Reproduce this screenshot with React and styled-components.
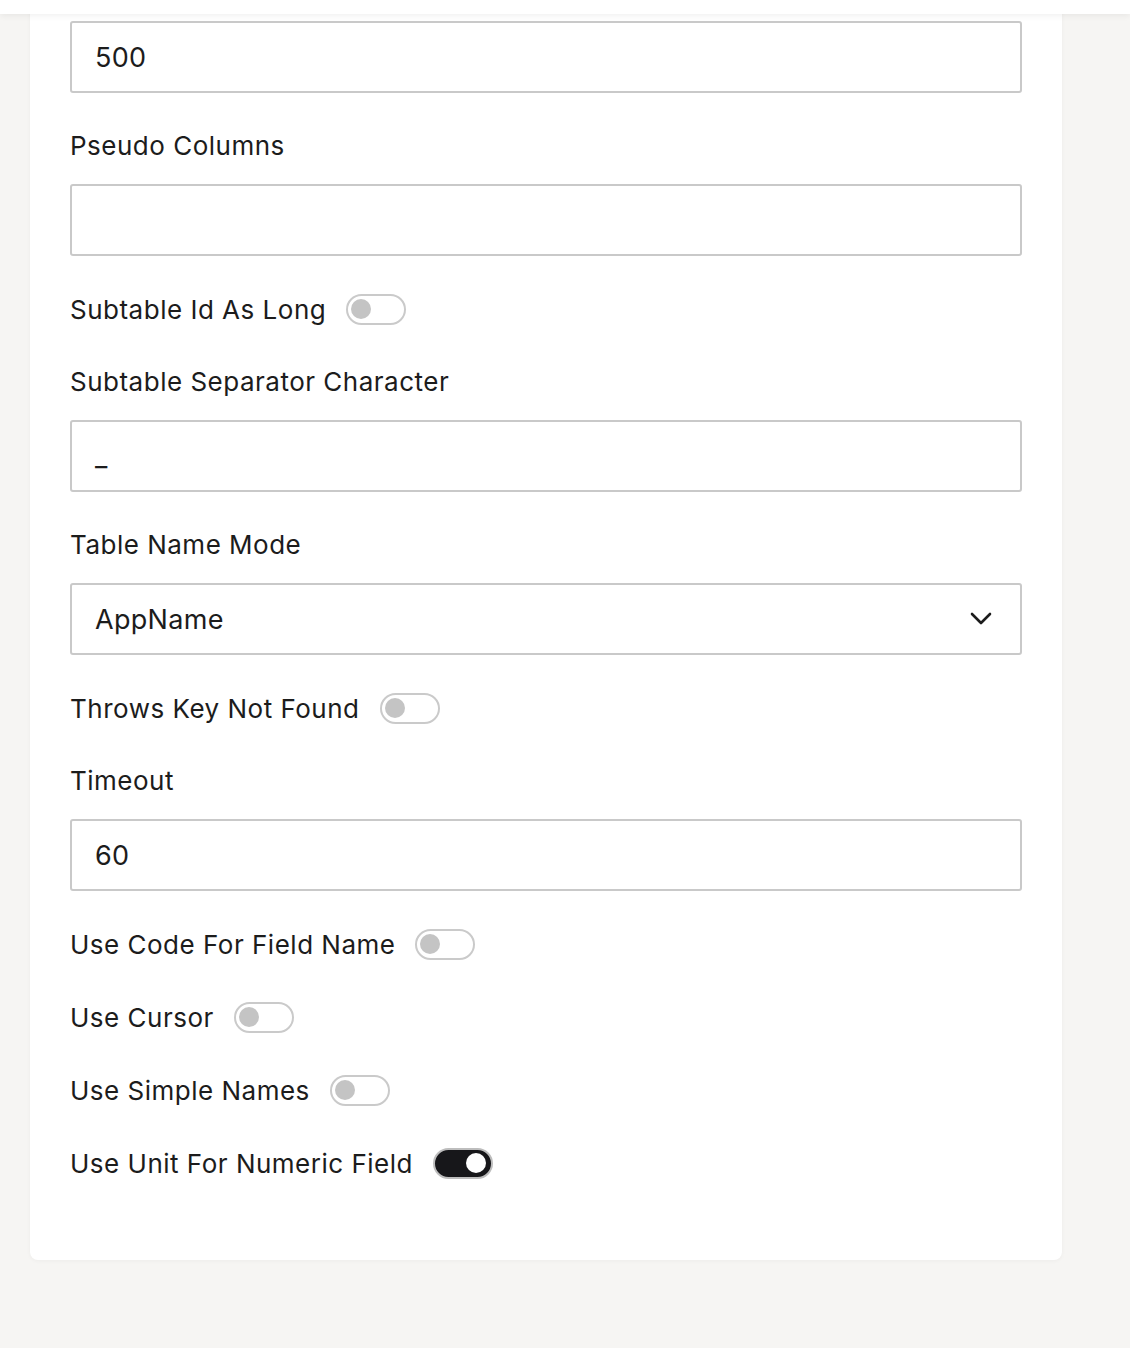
import React from 'react'
import styled, { createGlobalStyle } from 'styled-components'

const Global = createGlobalStyle`
  body {
    margin: 0;
    background: #f6f5f3;
    font-family: Inter, "Noto Sans", sans-serif;
    color: #1c1c1c;
  }
`

const TopBar = styled.div`
  position: absolute;
  top: 0;
  left: 0;
  right: 0;
  height: 14px;
  background: #fff;
  box-shadow: 0 2px 6px rgba(0, 0, 0, 0.06);
  z-index: 2;
`

const Page = styled.div`
  position: relative;
  height: 1348px;
  padding: 0 68px 0 30px;
`

const Card = styled.div`
  background: #fff;
  border-radius: 0 0 8px 8px;
  padding: 21px 40px 38px;
  height: 1260px;
  box-sizing: border-box;
  box-shadow: 0 1px 4px rgba(0, 0, 0, 0.04);
`

const Field = styled.div`
  margin-bottom: 35px;
`

const Label = styled.div`
  font-size: 26px;
  line-height: 36px;
  margin-bottom: 20px;
  letter-spacing: 0.5px;
`

const Input = styled.div`
  display: flex;
  align-items: center;
  justify-content: space-between;
  height: 72px;
  box-sizing: border-box;
  border: 2px solid #c9c9c9;
  border-radius: 3px;
  padding: 0 28px 0 23px;
  font-size: 27px;
  letter-spacing: 0.3px;
`

const ToggleRow = styled.div`
  display: flex;
  align-items: center;
  gap: 20px;
  height: 36px;
  margin-bottom: 37px;
  font-size: 26px;
  letter-spacing: 0.5px;
`

const Track = styled.span`
  position: relative;
  width: 60px;
  height: 31px;
  box-sizing: border-box;
  border-radius: 16px;
  border: 2px solid ${({ on }) => (on ? '#bdbdbd' : '#cacaca')};
  background: ${({ on }) => (on ? '#17171a' : '#fff')};
`

const Knob = styled.span`
  position: absolute;
  top: 3.5px;
  left: ${({ on }) => (on ? '31px' : '3px')};
  width: 20px;
  height: 20px;
  border-radius: 50%;
  background: ${({ on }) => (on ? '#fff' : '#c4c4c4')};
`

const Toggle = ({ label, on }) => (
  <ToggleRow>
    {label}
    <Track on={on}>
      <Knob on={on} />
    </Track>
  </ToggleRow>
)

const Chevron = () => (
  <svg width="22" height="14" viewBox="0 0 22 14" fill="none">
    <path d="M2 2l9 9 9-9" stroke="#1c1c1c" strokeWidth="2.6" strokeLinecap="round" strokeLinejoin="round" />
  </svg>
)

export default function App() {
  return (
    <Page>
      <Global />
      <TopBar />
      <Card>
        <Field>
          <Input>500</Input>
        </Field>
        <Field>
          <Label>Pseudo Columns</Label>
          <Input />
        </Field>
        <Toggle label="Subtable Id As Long" />
        <Field>
          <Label>Subtable Separator Character</Label>
          <Input>_</Input>
        </Field>
        <Field>
          <Label>Table Name Mode</Label>
          <Input>
            AppName
            <Chevron />
          </Input>
        </Field>
        <Toggle label="Throws Key Not Found" />
        <Field>
          <Label>Timeout</Label>
          <Input>60</Input>
        </Field>
        <Toggle label="Use Code For Field Name" />
        <Toggle label="Use Cursor" />
        <Toggle label="Use Simple Names" />
        <Toggle label="Use Unit For Numeric Field" on />
      </Card>
    </Page>
  )
}
